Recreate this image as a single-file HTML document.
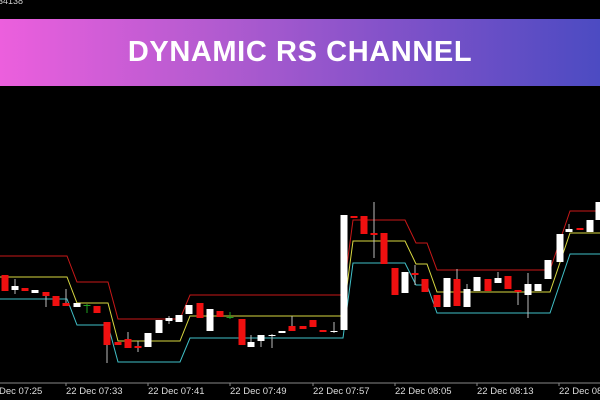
<!DOCTYPE html>
<html><head><meta charset="utf-8"><style>
html,body{margin:0;padding:0;background:#000;width:600px;height:400px;overflow:hidden;position:relative;font-family:"Liberation Sans",sans-serif}
#top{position:absolute;left:-2px;top:-4px;color:#ccc;font-size:9px}
#ban{position:absolute;left:0;top:19px;width:600px;height:67px;background:linear-gradient(90deg,#ec5fdd 0%,#b45bd0 35%,#8252c9 65%,#4c4bc2 100%);display:flex;align-items:center;justify-content:center;color:#fff;font-weight:bold;font-size:29px;letter-spacing:0.6px}
svg{position:absolute;left:0;top:0}
.lb{position:absolute;top:386px;color:#ddd;font-size:9.5px;white-space:nowrap}
</style></head><body>
<div id="top">34138</div>
<div id="ban">DYNAMIC RS CHANNEL</div>
<svg width="600" height="400" xmlns="http://www.w3.org/2000/svg">
<g fill="none" stroke-width="1">
<polyline stroke="#c81818" points="0,256 67,256 77,282 108,282 118,319 180,319 190,295 343,295 353,220 405,220 416,243 427,243 437,270 550,270 570,211 600,211"/>
<polyline stroke="#d8d840" points="0,277 67,277 77,303 108,303 118,341 180,341 190,316 343,316 353,241 405,241 416,264 427,264 437,292 550,292 570,233 600,233"/>
<polyline stroke="#40c0c8" points="0,299 67,299 77,325 108,325 118,362 180,362 190,338 343,338 353,263 405,263 416,285 427,285 437,313 550,313 570,254 600,254"/>
</g>
<g id="c"></g>
<line x1="0" y1="383" x2="600" y2="383" stroke="#888"/>
<g stroke="#888"><line x1="66" y1="383" x2="66" y2="386"/><line x1="148" y1="383" x2="148" y2="386"/><line x1="230" y1="383" x2="230" y2="386"/><line x1="313" y1="383" x2="313" y2="386"/><line x1="395" y1="383" x2="395" y2="386"/><line x1="477" y1="383" x2="477" y2="386"/><line x1="559" y1="383" x2="559" y2="386"/></g>
</svg>
<div class="lb" style="left:-1px">Dec 07:25</div>
<div class="lb" style="left:66px">22 Dec 07:33</div>
<div class="lb" style="left:148px">22 Dec 07:41</div>
<div class="lb" style="left:230px">22 Dec 07:49</div>
<div class="lb" style="left:313px">22 Dec 07:57</div>
<div class="lb" style="left:395px">22 Dec 08:05</div>
<div class="lb" style="left:477px">22 Dec 08:13</div>
<div class="lb" style="left:559px">22 Dec 08:21</div>
<script>
var d=[[5,275,291,'r'],[15,286,290,'w',279,294],[25,288,291,'r'],[35,290,293,'w'],[46,292,296,'r',292,307],[56,296,306,'r'],[66,303,306,'r',289,306],[77,303,307,'w'],[87,305,306,'g',304,313],[97,306,313,'r'],[107,322,345,'r',322,363],[118,342,345,'r'],[128,339,348,'r',332,348],[138,346,348,'r',341,352],[148,333,347,'w'],[159,320,333,'w'],[169,318,321,'w',316,324],[179,315,322,'w'],[189,305,314,'w'],[200,303,318,'r'],[210,309,331,'w'],[220,311,317,'r'],[230,317,318,'g',312,319],[242,319,345,'r'],[251,342,347,'w',335,347],[261,335,341,'w',335,347],[272,335,336,'w',334,348],[282,331,333,'w'],[292,326,331,'r',316,331],[303,326,329,'r'],[313,320,327,'r'],[323,330,332,'r'],[334,331,332,'w',322,333],[344,215,330,'w'],[354,216,218,'r'],[364,216,234,'r'],[374,233,235,'r',202,258],[384,233,264,'r'],[395,268,295,'r'],[405,272,293,'w'],[415,273,275,'r',265,285],[425,279,292,'r'],[437,295,307,'r'],[447,278,307,'w'],[457,279,306,'r',269,306],[467,289,307,'w',284,307],[477,277,291,'w'],[488,279,291,'r'],[498,278,283,'w',272,283],[508,276,289,'r'],[518,290,292,'r',290,305],[528,284,295,'w',273,318],[538,284,291,'w'],[548,260,279,'w'],[560,234,262,'w'],[569,229,232,'w',224,232],[580,228,230,'r'],[590,220,232,'w'],[599,202,220,'w']];
var col={r:'#f01010',w:'#ffffff',g:'#20a020'},s='';
d.forEach(function(c){var f=col[c[3]];if(c[4]!==undefined)s+='<line x1="'+c[0]+'" y1="'+c[4]+'" x2="'+c[0]+'" y2="'+c[5]+'" stroke="'+(c[3]=='g'?f:'#bbb')+'"/>';s+='<rect x="'+(c[0]-3.5)+'" y="'+c[1]+'" width="7" height="'+Math.max(1,c[2]-c[1])+'" fill="'+f+'"/>';});
document.getElementById('c').innerHTML=s;
</script>
</body></html>
